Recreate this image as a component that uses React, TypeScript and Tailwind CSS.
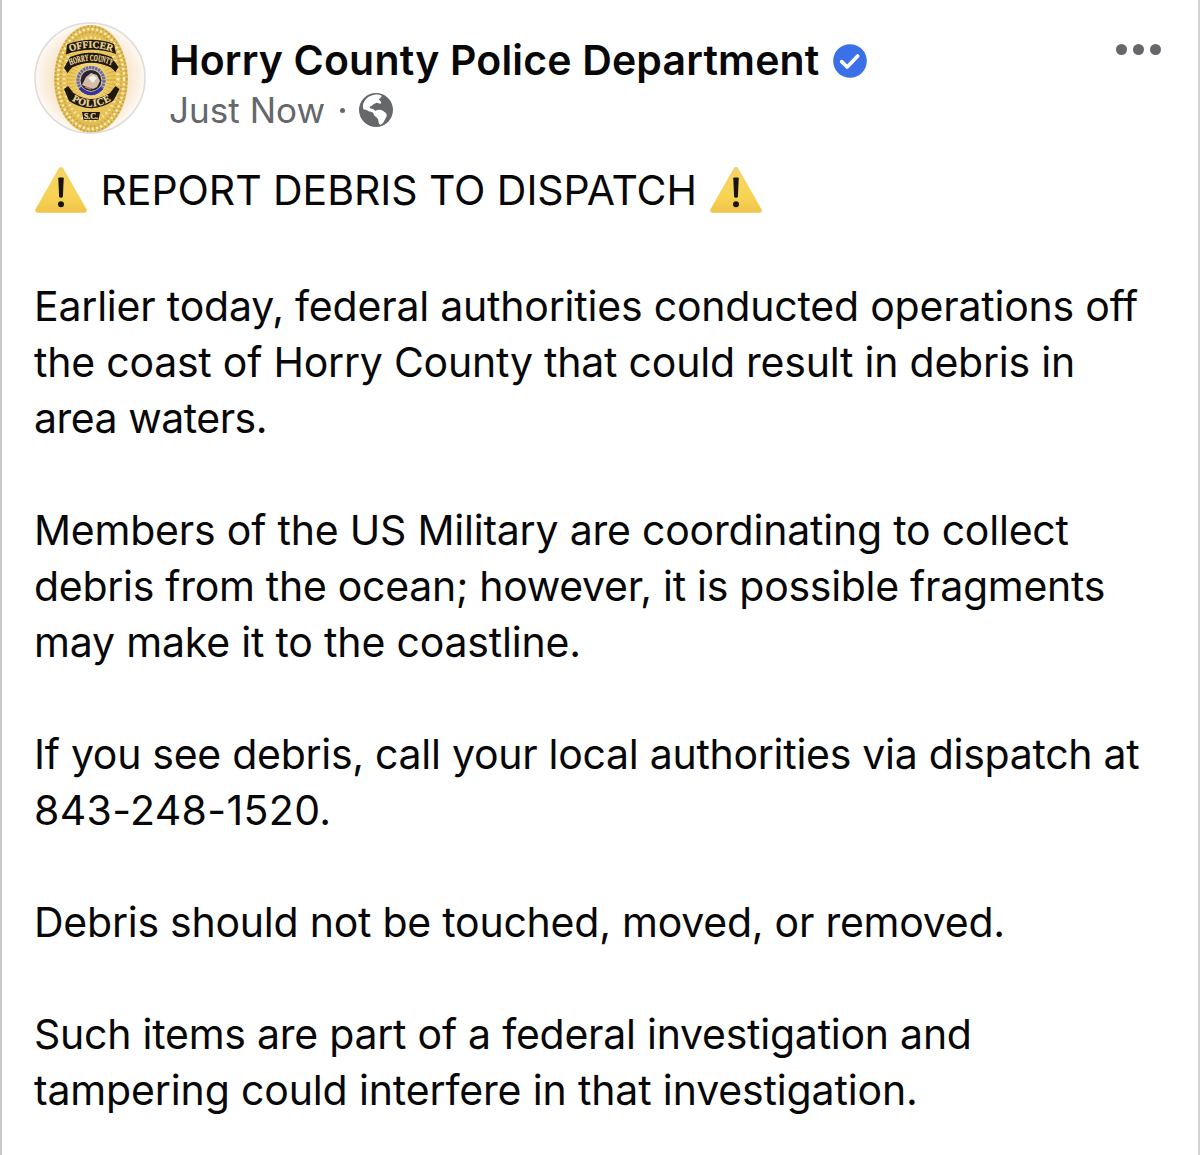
import type { ReactNode } from "react";

function Badge() {
  return (
    <svg viewBox="0 0 112 112" className="size-28 shrink-0" role="img" aria-label="Police badge">
      <defs>
        <radialGradient id="halo" cx="0.5" cy="0.5" r="0.5">
          <stop offset="0.6" stopColor="#f5e4c4" />
          <stop offset="0.85" stopColor="#fbf1e3" />
          <stop offset="1" stopColor="#fefaf5" />
        </radialGradient>
        <radialGradient id="gold" cx="0.5" cy="0.5" r="0.55">
          <stop offset="0" stopColor="#f8e08a" />
          <stop offset="0.55" stopColor="#e9c65c" />
          <stop offset="0.85" stopColor="#dfba55" />
          <stop offset="1" stopColor="#ecd48a" />
        </radialGradient>
        <clipPath id="disc">
          <circle cx="56" cy="56" r="55" />
        </clipPath>
        <path id="arcOfficer" d="M35 30 Q57 21.500 79 30" />
        <path id="arcCounty" d="M36 43.500 Q57 34 78 43.500" />
        <path id="arcPolice" d="M36.500 77.500 Q57 91.500 78.500 77.500" />
      </defs>
      <g clipPath="url(#disc)">
        <rect width="112" height="112" fill="url(#halo)" />
        <ellipse cx="57" cy="57" rx="37" ry="54" fill="url(#gold)" />
        <ellipse cx="57" cy="57" rx="35.500" ry="52.500" fill="none" stroke="#c59c40" strokeWidth="2" strokeDasharray="1.500 2.300" />
        <ellipse cx="57" cy="57" rx="33" ry="50" fill="none" stroke="#fdf0b4" strokeWidth="2.500" strokeDasharray="2 2.500" />
        <ellipse cx="57" cy="57" rx="30.500" ry="47" fill="none" stroke="#c9a040" strokeWidth="1.800" strokeDasharray="1.600 2.200" />
        <ellipse cx="57" cy="57" rx="27" ry="41.500" fill="none" stroke="#fbe9a3" strokeWidth="3" strokeDasharray="1.500 3" />
        <ellipse cx="57" cy="58" rx="20" ry="24" fill="none" stroke="#c4972f" strokeWidth="9" strokeDasharray="1 2.600" opacity="0.5" />
        <path d="M33 22.500 Q57 13.500 80 22 L82 32 Q57 23.500 32 32.500Z" fill="#1f190c" />
        <path d="M30 46 l6 -11 Q57 26.500 77.500 35 l7 10 -3 5 -4.500 -4.500 Q57 36 38 45.500 l-4.500 5.500Z" fill="#1f190c" />
        <path d="M30 67 l4 -3 5.500 7 Q57 83 76 71 l5.500 -7 4 3 -4 8 -2.500 4 Q57 93.500 35 79Z" fill="#1f190c" />
        <path d="M48 90h18l-1.500 8h-15Z" fill="#1f190c" />
        <circle cx="57" cy="58.500" r="14.800" fill="#d8c98f" />
        <circle cx="57" cy="58.500" r="13" fill="none" stroke="#6a66a8" strokeWidth="3.200" strokeDasharray="2.400 0.700" />
        <path d="M46 66 Q57 77 68 66" fill="none" stroke="#3434a4" strokeWidth="3.500" />
        <circle cx="57" cy="58.500" r="10.500" fill="#282239" />
        <path d="M48 63 l4 -8 5 -4 6 2 3 6 -3 6 -4 2 -6 -2Z" fill="#d3bfa5" />
        <path d="M54 56 l5 -3 4 3 -4 5Z" fill="#f4efe6" />
        <path d="M51 65 l6 2" stroke="#b98263" strokeWidth="1.500" />
        <g fontFamily="Liberation Serif, serif" fontWeight="700" fill="#f0dba0" stroke="#f0dba0" strokeWidth="0.250" textAnchor="middle">
          <text fontSize="10">
            <textPath href="#arcOfficer" startOffset="50%" textLength="43" lengthAdjust="spacingAndGlyphs">OFFICER</textPath>
          </text>
          <text fontSize="9">
            <textPath href="#arcCounty" startOffset="50%" textLength="43" lengthAdjust="spacingAndGlyphs">HORRY COUNTY</textPath>
          </text>
          <text fontSize="10">
            <textPath href="#arcPolice" startOffset="50%" textLength="42">POLICE</textPath>
          </text>
          <text x="57" y="97" fontSize="8">S.C.</text>
        </g>
      </g>
      <circle cx="56" cy="56" r="55" fill="none" stroke="#dfdcda" strokeWidth="1.600" />
    </svg>
  );
}

function Verified() {
  return (
    <svg viewBox="0 0 34 34" className="size-[34px]" role="img" aria-label="Verified">
      <circle cx="17" cy="17" r="16.800" fill="#3b71e8" />
      <path d="M8.700 17.600l5.500 5.400L24.700 12" fill="none" stroke="#fff" strokeWidth="3.600" strokeLinecap="round" strokeLinejoin="round" />
    </svg>
  );
}

function Globe() {
  return (
    <svg viewBox="0 0 100 100" className="size-[34px]" role="img" aria-label="Public">
      <circle cx="50" cy="50" r="50" fill="#65676b" />
      <path d="M12 45C9 28 22 10 42 6C50 4 60 4 66 7C69 10 60 15 59 19C61 23 67 25 65 30C60 34 57 28 52 29C47 31 44 32 40 35C36 39 36 42 34 44C41 43 43 50 48 52C57 48 67 49 74 55C83 60 83 66 79 73C74 81 73 89 65 93C57 94 58 83 56 77C53 70 44 69 43 61C42 55 33 56 26 52C20 48 14 52 12 45Z" fill="#fff" />
      <path d="M32 41C39 34 44 41 48 37C53 32 62 40 58 44C51 47 41 48 32 45Z" fill="#65676b" />
    </svg>
  );
}

function Warning({ id }: { id: string }) {
  return (
    <svg viewBox="0 0 52 46" className="h-[46px] w-[52px]" role="img" aria-label="Warning">
      <defs>
        <linearGradient id={id} x1="0" y1="0" x2="0" y2="1">
          <stop offset="0" stopColor="#f3d46a" />
          <stop offset="0.600" stopColor="#f8d454" />
          <stop offset="1" stopColor="#efc44c" />
        </linearGradient>
      </defs>
      <path d="M23.600 1.500Q26 -1.300 28.400 1.500L51.500 42.300Q52.600 45.600 49.500 45.800H2.500Q-0.600 45.600 0.500 42.300Z" fill={`url(#${id})`} />
      <path d="M23.300 11.300Q23.300 10.500 24.200 10.500H27.800Q28.700 10.500 28.700 11.300L27.900 29.500Q27.700 30.700 26 30.700T24.100 29.500Z" fill="#16140c" />
      <circle cx="26" cy="37.300" r="3" fill="#16140c" />
    </svg>
  );
}

function Line({ className, children }: { className: string; children: ReactNode }) {
  return <span className={`block whitespace-nowrap ${className}`}>{children}</span>;
}

export default function App() {
  return (
    <main className="h-[1155px] w-[1200px] overflow-hidden border-l-2 border-r-2 border-l-[#c9c9cb] border-r-[#d3d3d5] bg-white pl-8 font-['Inter',sans-serif] text-[#080809]">
      <header className="flex h-[162px] items-start pt-[22px]">
        <Badge />
        <div className="ml-[23px] flex-1 pt-[13px]">
          <div className="flex h-[50px] items-center">
            <h1 className="w-[664px] whitespace-nowrap text-[41px] leading-[50px] font-semibold tracking-[0.170px]">
              Horry County Police Department
            </h1>
            <div className="pt-0.5"><Verified /></div>
          </div>
          <div className="flex h-[50px] items-center text-[#65676b]">
            <span className="w-[171px] whitespace-nowrap text-[35px] leading-[50px] tracking-[0.050px]">Just Now</span>
            <span className="mr-[14px] size-[5px] rounded-full bg-[#65676b]" />
            <Globe />
          </div>
        </div>
        <div className="mr-[37px] mt-[22px] flex gap-[6px]">
          <span className="size-[11px] rounded-full bg-[#65676b]" />
          <span className="size-[11px] rounded-full bg-[#65676b]" />
          <span className="size-[11px] rounded-full bg-[#65676b]" />
        </div>
      </header>
      <article className="text-[41px] leading-[56px]">
        <h2 className="flex h-[60px] items-start">
          <span className="mt-[5px] ml-[0.500px] w-[66px]"><Warning id="warnLeft" /></span>
          <span className="w-[609.500px] whitespace-nowrap tracking-[-0.060px]">REPORT DEBRIS TO DISPATCH</span>
          <span className="mt-[5px]"><Warning id="warnRight" /></span>
        </h2>
        <div className="flex flex-col gap-14 pt-14">
          <p>
            <Line className="tracking-[-0.205px]">Earlier today, federal authorities conducted operations off</Line>
            <Line className="tracking-[-0.225px]">the coast of Horry County that could result in debris in</Line>
            <Line className="tracking-[-0.500px]">area waters.</Line>
          </p>
          <p>
            <Line className="tracking-[-0.210px]">Members of the US Military are coordinating to collect</Line>
            <Line className="tracking-[-0.285px]">debris from the ocean; however, it is possible fragments</Line>
            <Line className="tracking-[-0.185px]">may make it to the coastline.</Line>
          </p>
          <p>
            <Line className="tracking-[-0.280px]">If you see debris, call your local authorities via dispatch at</Line>
            <Line className="tracking-[0.350px]">843-248-1520.</Line>
          </p>
          <p>
            <Line className="tracking-[-0.240px]">Debris should not be touched, moved, or removed.</Line>
          </p>
          <p>
            <Line className="tracking-[-0.245px]">Such items are part of a federal investigation and</Line>
            <Line className="tracking-[-0.145px]">tampering could interfere in that investigation.</Line>
          </p>
        </div>
      </article>
    </main>
  );
}
